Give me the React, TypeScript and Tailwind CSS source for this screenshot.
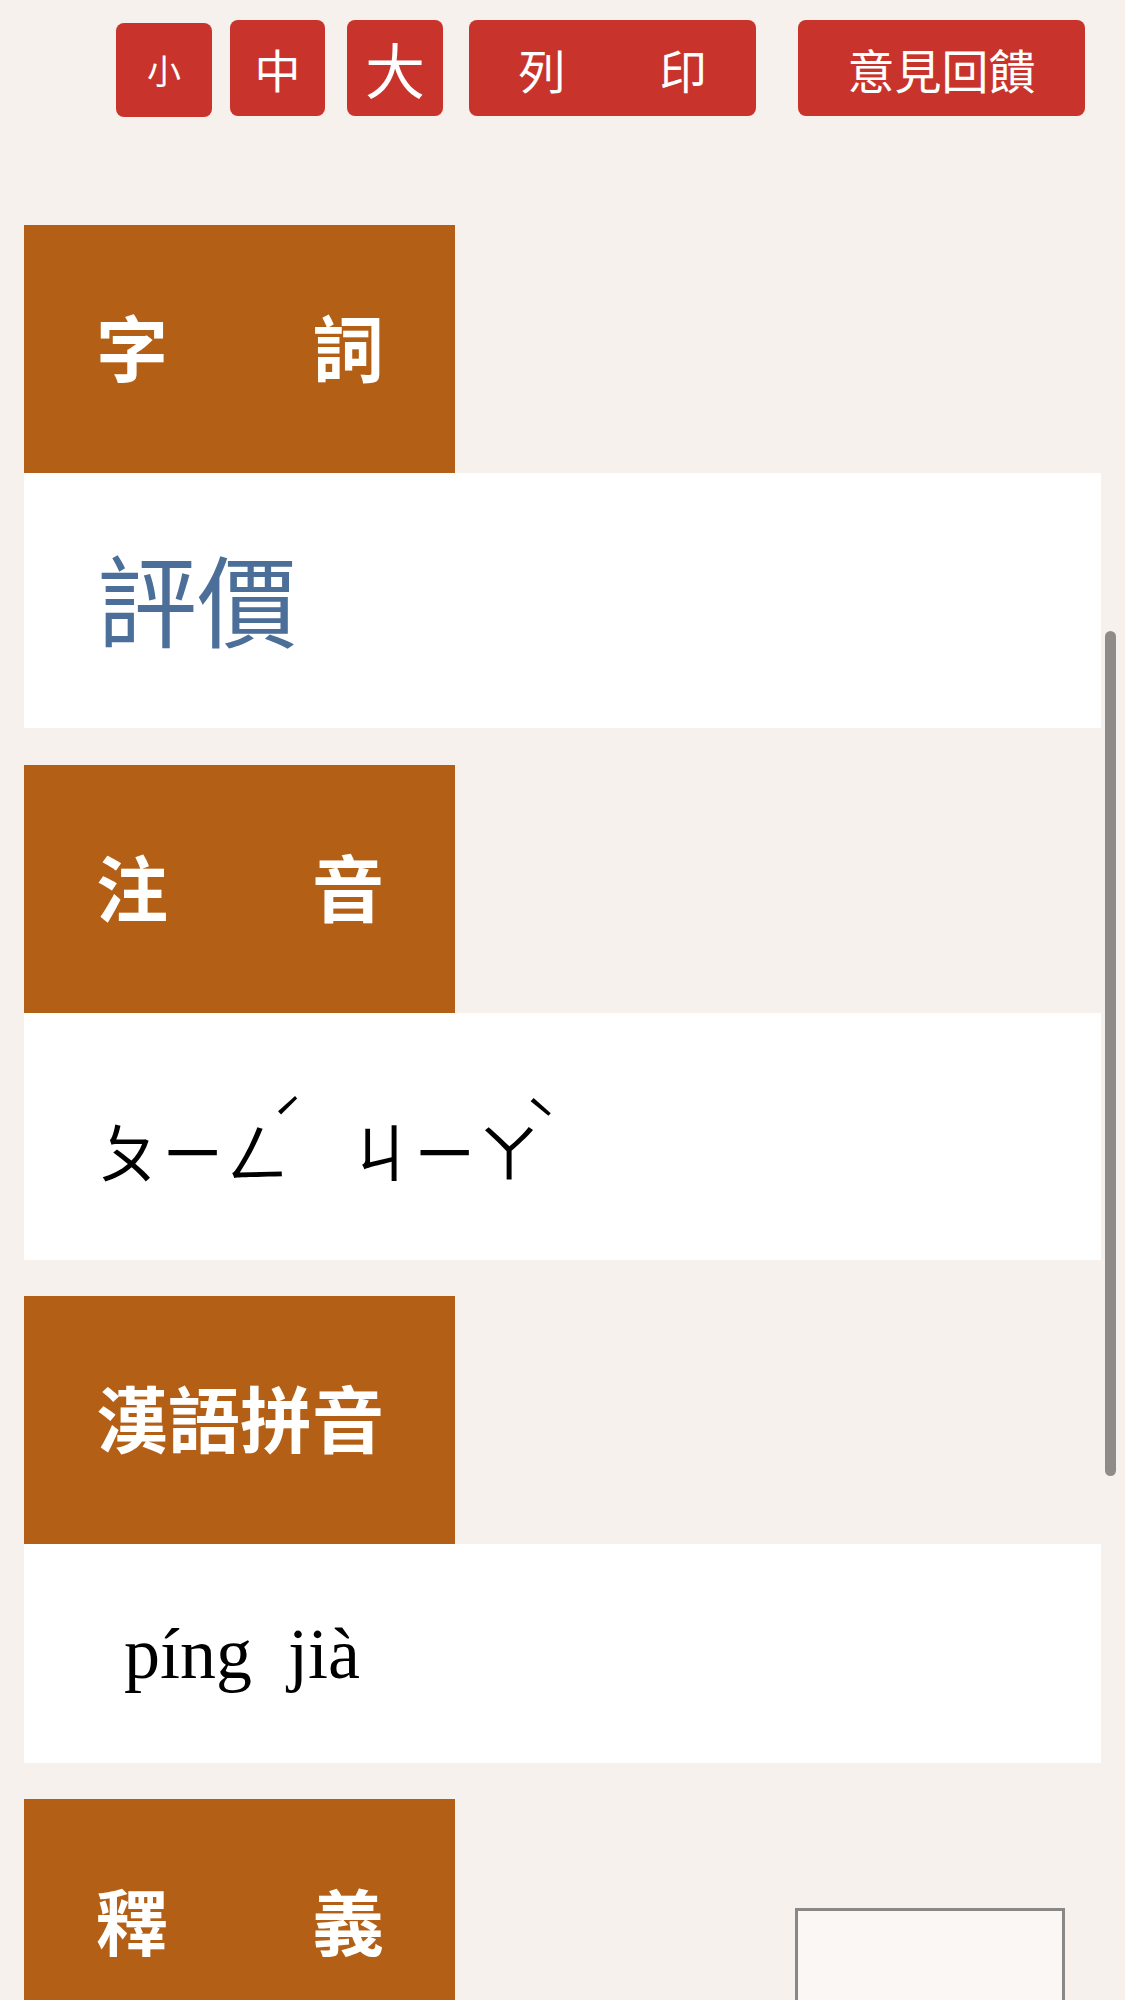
// 字詞詳細頁：字級按鈕 + 字詞 / 注音 / 拼音 / 釋義

const cjk = "font-['Noto_Sans_CJK_TC','Noto_Sans_CJK_SC',sans-serif]"

function Btn({ children, className }: { children: React.ReactNode; className: string }) {
  return (
    <button
      className={`flex items-center justify-center rounded-[8px] bg-[#c8342b] text-white leading-none ${cjk} ${className}`}
    >
      {children}
    </button>
  )
}

function Header({ label }: { label: string }) {
  return (
    <div className={`flex h-[248px] w-[431px] items-center bg-[#b35f16] pb-[8px] pl-[72px] text-[72px] font-bold leading-none text-white ${cjk}`}>
      {label}
    </div>
  )
}

export default function App() {
  return (
    <div className="relative min-h-screen w-full bg-[#f6f1ed] px-[24px]">
      {/* top toolbar */}
      <div className="flex items-start pt-[20px] pl-[92px]">
        <Btn className="mt-[3px] h-[94px] w-[96px] text-[34px]">小</Btn>
        <Btn className="ml-[18px] h-[96px] w-[95px] text-[46px]">中</Btn>
        <Btn className="ml-[22px] h-[96px] w-[96px] text-[60px]">大</Btn>
        <Btn className="ml-[26px] h-[96px] w-[287px] text-[47px]">列　　印</Btn>
        <Btn className="ml-[42px] h-[96px] w-[287px] text-[47px]">意見回饋</Btn>
      </div>

      <div className="mt-[108px] flex flex-col">
        {/* 字詞 */}
        <Header label="字　　詞" />
        <div className="flex h-[255px] items-center bg-white pb-[8px] pl-[73px]">
          <span className={`text-[100px] leading-none text-[#4b6f98] ${cjk}`}>評價</span>
        </div>

        {/* 注音 */}
        <div className="mt-[37px]">
          <Header label="注　　音" />
        </div>
        <div className="flex h-[247px] items-center bg-white pl-[73px]">
          <div className={`flex items-start text-[64px] leading-none text-black ${cjk}`}>
            <span className="mt-[24px]">ㄆㄧㄥ</span>
            <span className="-ml-[17px] w-[20px] text-[52px]">ˊ</span>
            <span className="ml-[57px] mt-[24px]">ㄐㄧㄚ</span>
            <span className="-ml-[16px] w-[20px] text-[52px]">ˋ</span>
          </div>
        </div>

        {/* 漢語拼音 */}
        <div className="mt-[36px]">
          <Header label="漢語拼音" />
        </div>
        <div className="flex h-[219px] items-center bg-white pl-[100px]">
          <span className="whitespace-pre font-['Liberation_Serif',serif] text-[72px] leading-none text-black">
            {'píng  jià'}
          </span>
        </div>

        {/* 釋義 */}
        <div className="mt-[36px] flex items-start justify-between pr-[36px]">
          <Header label="釋　　義" />
          <div className="mt-[109px] h-[200px] w-[270px] border-[3px] border-[#8a8787] bg-[#faf7f4]" />
        </div>
      </div>

      {/* overlay scrollbar */}
      <div className="fixed right-[9px] top-[631px] h-[845px] w-[11px] rounded-full bg-[#8f8b88]" />
    </div>
  )
}
